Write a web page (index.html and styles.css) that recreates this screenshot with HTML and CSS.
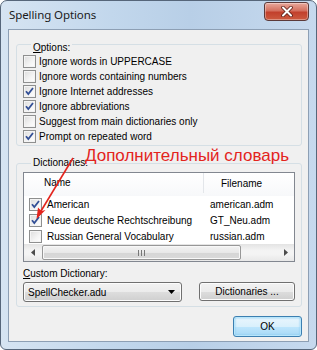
FILE: index.html
```html
<!DOCTYPE html>
<html lang="en">
<head>
    <meta charset="UTF-8">
    <title>Spelling Options</title>
    <link rel="stylesheet" href="styles.css">
</head>
<body>
    <div class="window">
        <div class="titlebar">
            <span class="title">Spelling Options</span>
            <div class="close">
                <svg width="14" height="11" viewBox="0 0 14 11">
                    <path d="M3 1.5 L11 9.5 M11 1.5 L3 9.5" stroke="#5a1d16" stroke-width="3.6" stroke-linecap="round"/>
                    <path d="M3 1.5 L11 9.5 M11 1.5 L3 9.5" stroke="#ffffff" stroke-width="2" stroke-linecap="round"/>
                </svg>
            </div>
        </div>

        <div class="client">
            <div class="group options">
                <div class="legend"><u>O</u>ptions:</div>
                <div class="check"><span class="box"></span>Ignore words in UPPERCASE</div>
                <div class="check"><span class="box"></span>Ignore words containing numbers</div>
                <div class="check"><span class="box checked"></span>Ignore Internet addresses</div>
                <div class="check"><span class="box checked"></span>Ignore abbreviations</div>
                <div class="check"><span class="box"></span>Suggest from main dictionaries only</div>
                <div class="check"><span class="box checked"></span>Prompt on repeated word</div>
            </div>

            <div class="group dicts">
                <div class="legend">Dictionaries:</div>
                <div class="list">
                    <div class="list-head">
                        <span class="head-name">Name</span>
                        <span class="head-file">Filename</span>
                    </div>
                    <div class="list-row">
                        <span class="cell-name"><span class="box checked"></span>American</span>
                        <span class="cell-file">american.adm</span>
                    </div>
                    <div class="list-row">
                        <span class="cell-name"><span class="box checked"></span>Neue deutsche Rechtschreibung</span>
                        <span class="cell-file">GT_Neu.adm</span>
                    </div>
                    <div class="list-row">
                        <span class="cell-name"><span class="box"></span>Russian General Vocabulary</span>
                        <span class="cell-file">russian.adm</span>
                    </div>
                    <div class="hscroll">
                        <span class="sb-arrow">
                            <svg width="4" height="7" viewBox="0 0 4 7"><path d="M4 0 L0 3.5 L4 7 Z" fill="#4d4d4d"/></svg>
                        </span>
                        <span class="sb-track">
                            <span class="sb-thumb">
                                <svg width="7" height="6" viewBox="0 0 7 6"><path d="M0.5 0 V6 M3.5 0 V6 M6.5 0 V6" stroke="#777" stroke-width="1"/></svg>
                            </span>
                        </span>
                        <span class="sb-arrow">
                            <svg width="4" height="7" viewBox="0 0 4 7"><path d="M0 0 L4 3.5 L0 7 Z" fill="#4d4d4d"/></svg>
                        </span>
                    </div>
                </div>

                <div class="field-label"><u>C</u>ustom Dictionary:</div>
                <div class="field-row">
                    <div class="combo">
                        <span>SpellChecker.adu</span>
                        <svg width="7" height="4" viewBox="0 0 7 4"><path d="M0 0 H7 L3.5 4 Z" fill="#000"/></svg>
                    </div>
                    <div class="btn dict-btn">Dictionaries ...</div>
                </div>
            </div>

            <div class="footer">
                <div class="btn ok-btn">OK</div>
            </div>
        </div>

        <!-- red note painted over the screenshot -->
        <div class="note">Дополнительный словарь</div>
        <svg class="note-arrow" width="317" height="350" viewBox="0 0 317 350">
            <path d="M73 158 L38 216" stroke="#e3241d" stroke-width="1.6" fill="none"/>
            <path d="M36.5 219 L38 207.5 L41.5 211 L45.5 210 Z" fill="#e3241d"/>
        </svg>
    </div>
</body>
</html>
```

FILE: styles.css
```css
body {
    margin: 0;
    background: #ffffff;
    font-family: "Liberation Sans", Arial, sans-serif;
    font-size: 10px;
    color: #000;
}

.window {
    position: relative;
    box-sizing: border-box;
    width: 317px;
    height: 350px;
    display: flex;
    flex-direction: column;
    padding: 0 7px 7px 7px;
    border: 1px solid #56667a;
    border-radius: 7px 7px 6px 6px;
    background: linear-gradient(to right, #d6e4f2 0%, #c2d7ec 35%, #b8cfe7 60%, #c6d9ee 100%);
}

.titlebar {
    height: 28px;
    flex: none;
    display: flex;
    justify-content: space-between;
    align-items: flex-start;
}

.title {
    font-family: "Noto Sans", "Open Sans", sans-serif;
    font-size: 11.5px;
    color: #1b1b1b;
    padding: 6px 0 0 1px;
    letter-spacing: -0.1px;
}

.close {
    width: 45px;
    height: 19px;
    box-sizing: border-box;
    margin-top: 1px;
    border: 1px solid #5b3a3a;
    border-radius: 3px 3px 4px 4px;
    background: linear-gradient(#e9a99c 0%, #d4705f 45%, #c2402c 55%, #cc5a3f 100%);
    box-shadow: inset 0 0 0 1px rgba(255, 255, 255, 0.35);
    display: flex;
    align-items: center;
    justify-content: center;
}

.client {
    flex: 1;
    display: flex;
    flex-direction: column;
    padding: 0 6px 0 7px;
    border: 1px solid #8d9fb4;
    background: #f0f0f0;
}

.group {
    border: 1px solid #d5dfe5;
    border-radius: 3px;
    box-shadow: inset 0 0 0 0 #fff;
}

.legend {
    width: fit-content;
    margin: -8px 0 0 8px;
    padding: 0 2px;
    line-height: 13px;
    background: #f0f0f0;
}

.options {
    margin-top: 14px;
    padding: 4px 0 1px 6px;
}

.check {
    height: 15px;
    display: flex;
    align-items: center;
    gap: 3px;
}

.box {
    width: 13px;
    height: 13px;
    box-sizing: border-box;
    flex: none;
    border: 1px solid #8e8f8f;
    background: linear-gradient(135deg, #dcdcdc 0%, #f4f4f4 60%, #ffffff 100%);
    box-shadow: inset 0 0 0 1px #f4f4f4;
}

.box.checked {
    background:
        url("data:image/svg+xml,%3Csvg xmlns='http://www.w3.org/2000/svg' width='11' height='11' viewBox='0 0 11 11'%3E%3Cpath d='M2 5.2 L4.3 8 L9 2' stroke='%23324f96' stroke-width='1.8' fill='none'/%3E%3C/svg%3E") center / 11px 11px no-repeat,
        linear-gradient(135deg, #dcdcdc 0%, #f4f4f4 60%, #ffffff 100%);
}

.dicts {
    margin-top: 17px;
    padding: 0 6px 4px 6px;
}

.list {
    margin-top: 3px;
    height: 90px;
    box-sizing: border-box;
    border: 1px solid #828790;
    background: #ffffff;
    display: flex;
    flex-direction: column;
}

.list-head {
    height: 23px;
    flex: none;
    display: flex;
    align-items: center;
    padding-bottom: 3px;
    box-sizing: border-box;
    background: linear-gradient(#ffffff, #f7f8fa);
}

.head-name {
    width: 180px;
    box-sizing: border-box;
    padding-left: 20px;
    border-right: 1px solid #e3e6ea;
    line-height: 20px;
}

.head-file {
    padding-left: 17px;
}

.list-row {
    height: 16px;
    flex: none;
    display: flex;
    align-items: center;
}

.cell-name {
    width: 181px;
    box-sizing: border-box;
    padding-left: 5px;
    display: flex;
    align-items: center;
    gap: 5px;
}

.cell-file {
    padding-left: 5px;
}

.hscroll {
    margin-top: auto;
    height: 17px;
    flex: none;
    display: flex;
    align-items: center;
    background: linear-gradient(#e3e3e3, #f4f4f4 40%, #f4f4f4 60%, #e8e8e8);
}

.sb-arrow {
    width: 17px;
    height: 17px;
    display: flex;
    align-items: center;
    justify-content: center;
}

.sb-track {
    flex: 1;
    height: 17px;
    display: flex;
    align-items: center;
}

.sb-thumb {
    width: 199px;
    height: 15px;
    margin-left: 1px;
    box-sizing: border-box;
    border: 1px solid #979797;
    border-radius: 2px;
    background: linear-gradient(#f3f3f3, #e8e8e8 50%, #d6d6d6 51%, #d9d9d9);
    box-shadow: inset 0 0 0 1px #f8f8f8;
    display: flex;
    align-items: center;
    justify-content: center;
}

.field-label {
    margin-top: 5px;
    line-height: 13px;
}

.field-row {
    margin-top: 2px;
    display: flex;
    justify-content: space-between;
    align-items: flex-start;
}

.combo {
    width: 159px;
    height: 20px;
    box-sizing: border-box;
    padding: 0 6px 0 4px;
    border: 1px solid #707070;
    border-radius: 3px;
    background: linear-gradient(#f2f2f2, #ebebeb 50%, #dddddd 51%, #cfcfcf);
    box-shadow: inset 0 0 0 1px #fcfcfc;
    display: flex;
    align-items: center;
    justify-content: space-between;
}

.btn {
    box-sizing: border-box;
    border: 1px solid #707070;
    border-radius: 3px;
    background: linear-gradient(#f2f2f2, #ebebeb 50%, #dddddd 51%, #cfcfcf);
    box-shadow: inset 0 0 0 1px #fcfcfc;
    display: flex;
    align-items: center;
    justify-content: center;
}

.dict-btn {
    width: 96px;
    height: 19px;
}

.footer {
    margin-top: 9px;
    display: flex;
    justify-content: flex-end;
}

.ok-btn {
    width: 69px;
    height: 21px;
    border-color: #3c7fb1;
    background: linear-gradient(#eaf6fd, #d9f0fc 50%, #bee6fd 51%, #a7d9f5);
    box-shadow: inset 0 0 0 1px #b8e6fb, inset 0 0 2px 1px #7fc7ef;
}

.note {
    position: absolute;
    left: 84px;
    top: 146px;
    font-size: 17px;
    line-height: 17px;
    color: #e3241d;
    white-space: nowrap;
}

.note-arrow {
    position: absolute;
    left: -1px;
    top: -1px;
    pointer-events: none;
}
```
